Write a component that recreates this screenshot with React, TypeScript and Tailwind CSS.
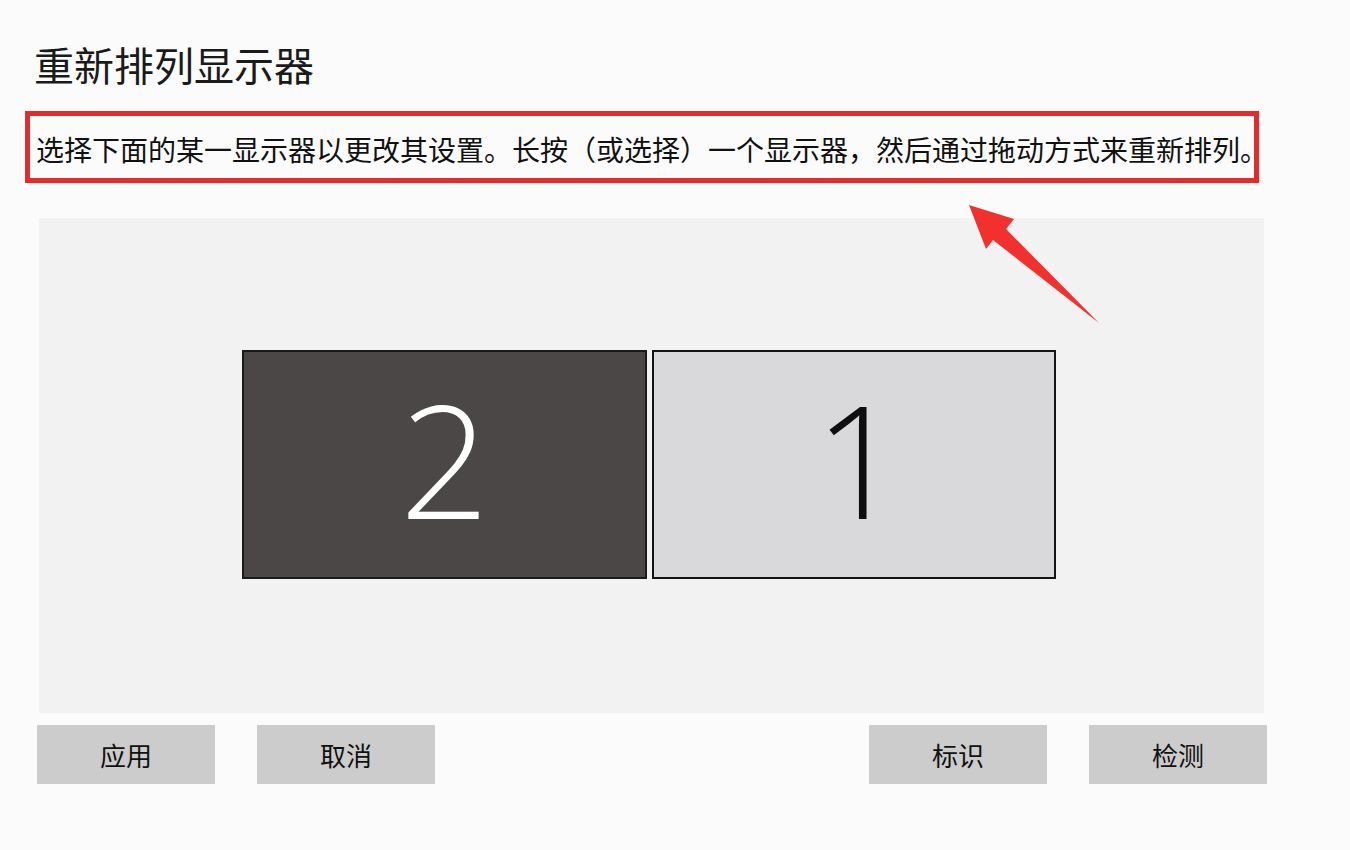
const cjk = { fontFamily: '"Noto Sans CJK SC", "Noto Sans", sans-serif' };
const digit = { fontFamily: '"Open Sans", "Lato", sans-serif' };

const leftButtons = ["应用", "取消"];
const rightButtons = ["标识", "检测"];

const ActionButton = ({ label }: { label: string }) => (
  <button
    className="w-[178px] h-[59px] bg-[#cccccc] flex items-center justify-center text-[26px] leading-none text-[#111111]"
    style={cjk}
  >
    {label}
  </button>
);

const App = () => {
  return (
    <div className="relative w-full h-[850px] bg-[#fbfbfc] overflow-hidden" style={cjk}>
      {/* Title */}
      <h1 className="ml-[34px] pt-[44px] text-[40px] leading-none font-normal text-[#1a1a1a]">
        重新排列显示器
      </h1>

      {/* Highlighted description */}
      <div className="ml-[25px] mt-[27px] w-[1234px] h-[72px] border-[5px] border-[#e32b2b] pt-[19px] pl-[6px]">
        <p className="text-[28px] leading-none whitespace-nowrap text-[#111111]">
          选择下面的某一显示器以更改其设置。长按（或选择）一个显示器，然后通过拖动方式来重新排列。
        </p>
      </div>

      {/* Display arrangement canvas */}
      <div className="ml-[39px] mt-[35px] w-[1225px] h-[495px] bg-[#f2f2f3] pt-[132px] pl-[203px]">
        <div className="flex gap-[5px]">
          <div className="w-[405px] h-[229px] bg-[#4a4746] border-2 border-[#1a1a1a] flex items-center justify-center pb-[12px]">
            <span className="text-[157px] leading-none font-light text-white" style={digit}>
              2
            </span>
          </div>
          <div className="w-[404px] h-[229px] bg-[#d9d9db] border-2 border-[#141414] flex items-center justify-center pb-[12px] pl-[10px]">
            <span className="text-[157px] leading-none font-light text-[#0e0e0e]" style={digit}>
              1
            </span>
          </div>
        </div>
      </div>

      {/* Buttons */}
      <div className="ml-[37px] mt-[12px] w-[1230px] flex justify-between">
        <div className="flex gap-[42px]">
          {leftButtons.map((b) => (
            <ActionButton key={b} label={b} />
          ))}
        </div>
        <div className="flex gap-[42px]">
          {rightButtons.map((b) => (
            <ActionButton key={b} label={b} />
          ))}
        </div>
      </div>

      {/* Red annotation arrow */}
      <svg className="absolute left-0 top-0 pointer-events-none" width="1350" height="850">
        <polygon
          points="969,205 1014,219 1006,229 1099,323 993,240 986,249"
          fill="#f2312f"
        />
      </svg>
    </div>
  );
};

export default App;
